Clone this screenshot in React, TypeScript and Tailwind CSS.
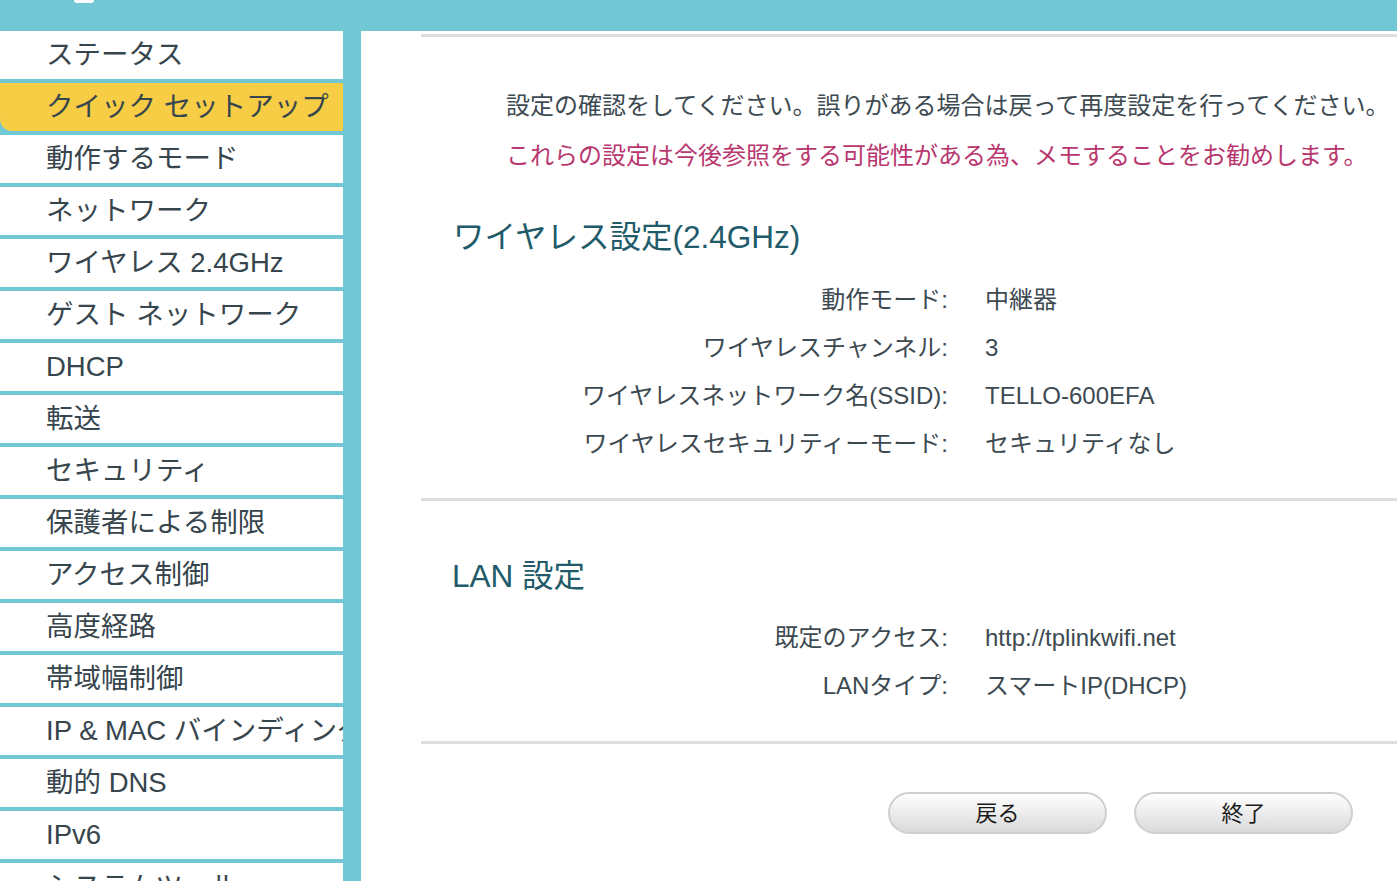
import React from 'react';

const menu = [
  'ステータス',
  'クイック セットアップ',
  '動作するモード',
  'ネットワーク',
  'ワイヤレス 2.4GHz',
  'ゲスト ネットワーク',
  'DHCP',
  '転送',
  'セキュリティ',
  '保護者による制限',
  'アクセス制御',
  '高度経路',
  '帯域幅制御',
  'IP & MAC バインディング',
  '動的 DNS',
  'IPv6',
  'システムツール',
];

const wireless = [
  ['動作モード:', '中継器'],
  ['ワイヤレスチャンネル:', '3'],
  ['ワイヤレスネットワーク名(SSID):', 'TELLO-600EFA'],
  ['ワイヤレスセキュリティーモード:', 'セキュリティなし'],
];

const lan = [
  ['既定のアクセス:', 'http://tplinkwifi.net'],
  ['LANタイプ:', 'スマートIP(DHCP)'],
];

function Row({ label, value }: { label: string; value: string }) {
  return (
    <div className="flex h-[48px] items-center text-[24px] text-[#3d4a52] whitespace-nowrap">
      <div className="w-[527px] text-right">{label}</div>
      <div className="ml-[37px]">{value}</div>
    </div>
  );
}

export default function App() {
  return (
    <div
      className="w-[1397px] h-[881px] overflow-hidden bg-white flex flex-col"
      style={{ fontFamily: '"Liberation Sans", "Noto Sans CJK JP", sans-serif' }}
    >
      <div className="h-[31px] shrink-0 bg-[#71c7d3] relative">
        <div className="absolute left-[74px] top-0 w-[20px] h-[3px] bg-white rounded-b-sm" />
      </div>

      <div className="flex flex-1 min-h-0">
        {/* sidebar */}
        <div className="w-[361px] shrink-0 bg-[#71c7d3] pr-[18px] overflow-hidden">
          <ul className="flex flex-col gap-[4px]">
            {menu.map((item, i) => (
              <li
                key={i}
                className={
                  i === 1
                    ? 'h-[48px] shrink-0 flex items-center pl-[46px] bg-[#f7cd45] rounded-bl-[12px] text-[27.5px] text-[#37454d] whitespace-nowrap overflow-hidden'
                    : 'h-[48px] shrink-0 flex items-center pl-[46px] bg-white text-[27.5px] text-[#37454d] whitespace-nowrap overflow-hidden'
                }
              >
                {item}
              </li>
            ))}
          </ul>
        </div>

        {/* main */}
        <div className="flex-1 pl-[60px]">
          <div className="mt-[3px] h-[3px] bg-[#dedede]" />

          <div className="pt-[44px] pl-[85px] text-[24px] whitespace-nowrap">
            <p className="h-[50px] flex items-center text-[#3d4a52]">
              設定の確認をしてください。誤りがある場合は戻って再度設定を行ってください。
            </p>
            <p className="h-[50px] flex items-center text-[#b8376f]">
              これらの設定は今後参照をする可能性がある為、メモすることをお勧めします。
            </p>
          </div>

          <h2 className="mt-[32px] h-[50px] flex items-center pl-[32px] text-[31.5px] text-[#215a69]">
            ワイヤレス設定(2.4GHz)
          </h2>
          <div className="mt-[13px]">
            {wireless.map(([l, v]) => (
              <Row key={l} label={l} value={v} />
            ))}
          </div>

          <div className="mt-[30px] h-[3px] bg-[#dedede]" />

          <h2 className="mt-[51px] h-[50px] flex items-center pl-[31px] text-[31.5px] text-[#215a69]">
            LAN 設定
          </h2>
          <div className="mt-[12px]">
            {lan.map(([l, v]) => (
              <Row key={l} label={l} value={v} />
            ))}
          </div>

          <div className="mt-[31px] h-[3px] bg-[#dedede]" />

          <div className="mt-[48px] pl-[467px] flex gap-[27px]">
            <button className="w-[219px] h-[42px] rounded-full border-2 border-[#cfcfcf] bg-gradient-to-b from-white to-[#dadada] text-[22px] text-[#1a1a1a]">
              戻る
            </button>
            <button className="w-[219px] h-[42px] rounded-full border-2 border-[#cfcfcf] bg-gradient-to-b from-white to-[#dadada] text-[22px] text-[#1a1a1a]">
              終了
            </button>
          </div>
        </div>
      </div>
    </div>
  );
}
